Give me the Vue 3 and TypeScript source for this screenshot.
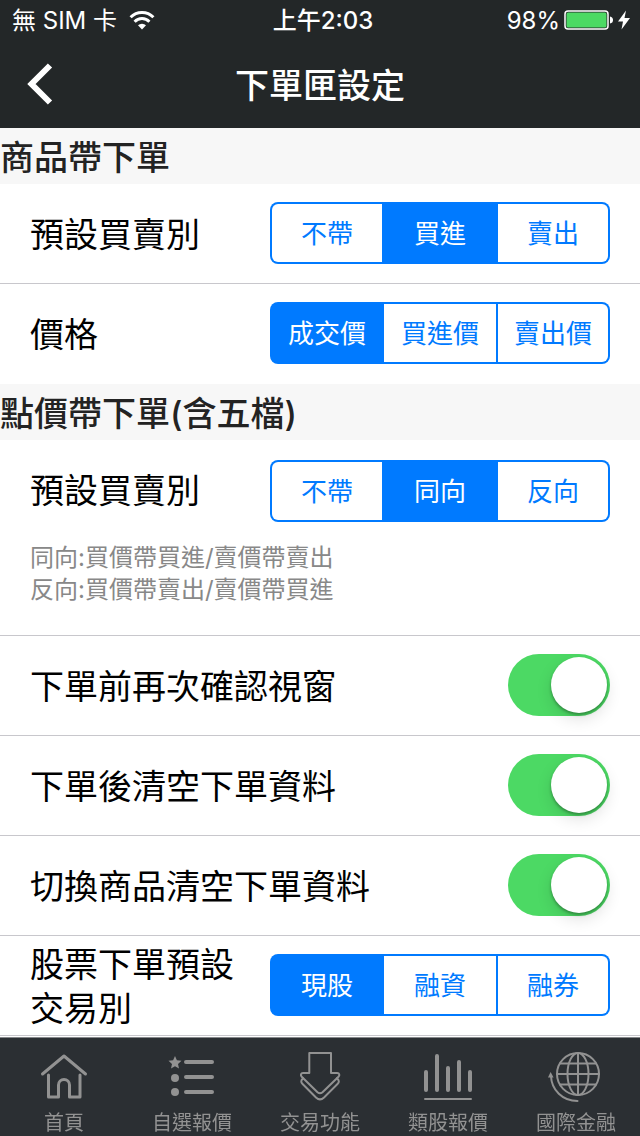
<script setup lang="ts">
import { reactive } from 'vue'

interface ChoiceRow {
  kind: 'choice'
  id: string
  label: string
  options: string[]
  notes?: string[]
}

interface SwitchRow {
  kind: 'switch'
  id: string
  label: string
}

interface Section {
  id: string
  title: string
  rows: (ChoiceRow | SwitchRow)[]
}

const sections: Section[] = [
  {
    id: 'quote',
    title: '商品帶下單',
    rows: [
      { kind: 'choice', id: 'quote-side', label: '預設買賣別', options: ['不帶', '買進', '賣出'] },
      { kind: 'choice', id: 'quote-price', label: '價格', options: ['成交價', '買進價', '賣出價'] },
    ],
  },
  {
    id: 'tick',
    title: '點價帶下單(含五檔)',
    rows: [
      {
        kind: 'choice',
        id: 'tick-side',
        label: '預設買賣別',
        options: ['不帶', '同向', '反向'],
        notes: ['同向:買價帶買進/賣價帶賣出', '反向:買價帶賣出/賣價帶買進'],
      },
      { kind: 'switch', id: 'confirm', label: '下單前再次確認視窗' },
      { kind: 'switch', id: 'clear-after', label: '下單後清空下單資料' },
      { kind: 'switch', id: 'clear-change', label: '切換商品清空下單資料' },
      { kind: 'choice', id: 'stock-type', label: '股票下單預設交易別', options: ['現股', '融資', '融券'] },
    ],
  },
]

const choices = reactive<Record<string, string>>({
  'quote-side': '買進',
  'quote-price': '成交價',
  'tick-side': '同向',
  'stock-type': '現股',
})

const switches = reactive<Record<string, boolean>>({
  confirm: true,
  'clear-after': true,
  'clear-change': true,
})

const tabs = [
  { id: 'home', label: '首頁' },
  { id: 'watch', label: '自選報價' },
  { id: 'trade', label: '交易功能' },
  { id: 'sector', label: '類股報價' },
  { id: 'global', label: '國際金融' },
]
</script>

<template>
  <div class="screen">
    <header class="top">
      <div class="status">
        <div class="carrier">
          <span>無 SIM 卡</span>
          <svg class="wifi" viewBox="0 0 26 20" aria-hidden="true">
            <path d="M1.600 7.200a16 16 0 0 1 22.800 0" fill="none" stroke="#fff" stroke-width="3" />
            <path d="M5.600 11.700a10.400 10.400 0 0 1 14.800 0" fill="none" stroke="#fff" stroke-width="3" />
            <path d="M13 19.500l-4-4.200a5.800 5.800 0 0 1 8 0z" fill="#fff" />
          </svg>
        </div>
        <span class="clock">上午2:03</span>
        <div class="power">
          <span>98%</span>
          <svg class="battery" viewBox="0 0 50 20" aria-hidden="true">
            <rect x="1" y="1" width="43" height="18" rx="3" fill="none" stroke="#fff" stroke-width="1.500" />
            <rect x="2.500" y="2.500" width="40" height="15" rx="1.500" fill="#4cd964" />
            <path d="M46 6.500q3 .5 3 3.500t-3 3.500z" fill="#fff" />
          </svg>
          <svg class="bolt" viewBox="0 0 12 20" aria-hidden="true">
            <path d="M8 .5L0 11.500h5L3.500 19.500L12 8H6.500z" fill="#fff" />
          </svg>
        </div>
      </div>
      <div class="bar">
        <button class="back" type="button" aria-label="返回">
          <svg viewBox="0 0 26 42" aria-hidden="true">
            <path d="M23 2.500L4.500 21L23 39.500" fill="none" stroke="#fff" stroke-width="6" />
          </svg>
        </button>
        <h1>下單匣設定</h1>
      </div>
    </header>

    <main>
      <section v-for="section in sections" :key="section.id">
        <h2>{{ section.title }}</h2>
        <template v-for="row in section.rows" :key="row.id">
          <div v-if="row.kind === 'choice'" class="row" :class="{ noted: row.notes }">
            <div class="line">
              <span :id="row.id" class="label">{{ row.label }}</span>
              <div class="segments" role="radiogroup" :aria-labelledby="row.id">
                <label v-for="option in row.options" :key="option" class="segment">
                  <input v-model="choices[row.id]" type="radio" :name="row.id" :value="option" />
                  <span>{{ option }}</span>
                </label>
              </div>
            </div>
            <p v-if="row.notes" class="notes">
              <span v-for="note in row.notes" :key="note">{{ note }}</span>
            </p>
          </div>
          <div v-else class="row">
            <div class="line">
              <label class="label" :for="row.id">{{ row.label }}</label>
              <input :id="row.id" v-model="switches[row.id]" class="switch" type="checkbox" role="switch" />
            </div>
          </div>
        </template>
      </section>
    </main>

    <nav class="tabs">
      <a v-for="tab in tabs" :key="tab.id" :href="'#' + tab.id">
        <svg viewBox="0 0 56 56" aria-hidden="true">
          <g v-if="tab.id === 'home'" class="stroke">
            <path d="M6.500 26L28 8l21.500 18" />
            <path d="M12.500 27v22h10V37a5.500 5.500 0 0 1 11 0v12h10.500V27" />
          </g>
          <g v-else-if="tab.id === 'watch'">
            <path
              class="fill"
              d="M11 8l1.900 4.300 4.600.5-3.500 3.200 1 4.600-4-2.300-4 2.300 1-4.600-3.500-3.200 4.600-.5z"
            />
            <circle class="fill" cx="11" cy="30" r="4" />
            <circle class="fill" cx="11" cy="44" r="4" />
            <path class="thick" d="M22 14h26M22 29h26M22 44h26" />
          </g>
          <g v-else-if="tab.id === 'trade'" class="thin">
            <path
              d="M17.300 25V5h21.700v20h6.200c2.200 0 2.800 2.200 1.300 3.700L30.500 44.200q-2.500 2.200-5 0L9.700 28.700c-1.500-1.500-.9-3.700 1.300-3.700z"
            />
            <path d="M11.200 30.200c-2.500 2.200-2.500 4-.6 5.800L24 49.500q4 3.800 8 0L45.500 36c1.900-1.800 1.900-3.600-.6-5.800" />
          </g>
          <g v-else-if="tab.id === 'sector'">
            <path class="thick" d="M6 24v18M17 8v34M28 20v22M39 14v28M50 24v18" />
            <path class="thin" d="M5 51h46" />
          </g>
          <g v-else class="thin">
            <circle cx="30" cy="26" r="21" />
            <ellipse cx="30" cy="26" rx="10.500" ry="21" />
            <path d="M30 5v42M9 26h42M12 15.500h36M12 36.500h36" />
            <path d="M29.500 53C14.500 53 3.500 42 3 28" />
            <path class="fill" stroke="none" d="M2.600 24L0 29.500h5.600z" />
          </g>
        </svg>
        <span>{{ tab.label }}</span>
      </a>
    </nav>
  </div>
</template>

<style>
body {
  margin: 0;
  background: #fff;
}
</style>

<style scoped>
.screen {
  display: flex;
  flex-direction: column;
  min-height: 100vh;
  color: #000;
  font-family: Inter, 'Noto Sans CJK TC', sans-serif;
  font-size: 34px;
}

.top {
  background: #232728;
  color: #fff;
}

.status {
  display: grid;
  grid-template-columns: 1fr auto 1fr;
  align-items: center;
  height: 40px;
  padding: 0 10px 0 12px;
  font-size: 24px;
  line-height: 38px;
}

.status span {
  padding-top: 2px;
}

.carrier,
.power {
  display: flex;
  align-items: center;
}

.carrier {
  gap: 12px;
}

.power {
  justify-content: flex-end;
  gap: 4px;
}

.clock {
  padding-left: 4px;
  font-weight: 500;
}

.wifi {
  width: 26px;
  height: 20px;
}

.battery {
  width: 50px;
  height: 20px;
}

.bolt {
  width: 12px;
  height: 20px;
}

.bar {
  display: grid;
  grid-template-columns: 80px 1fr 80px;
  align-items: center;
  height: 88px;
}

.back {
  display: flex;
  align-items: center;
  justify-content: center;
  height: 88px;
  padding: 0;
  border: 0;
  background: none;
}

.back svg {
  width: 26px;
  height: 42px;
}

h1 {
  margin: 0;
  padding-top: 4px;
  font-size: 34px;
  font-weight: 500;
  line-height: 84px;
  text-align: center;
}

main {
  flex: 1;
}

h2 {
  margin: 0;
  padding-top: 4px;
  background: #f7f7f7;
  color: #232323;
  font-size: 34px;
  font-weight: 500;
  line-height: 52px;
}

.row {
  box-sizing: border-box;
  min-height: 100px;
  padding: 0 30px;
  border-bottom: 1px solid #c8c7cc;
}

section:first-child .row:last-child {
  border-bottom-color: transparent;
}

.line {
  display: flex;
  align-items: center;
  gap: 20px;
  min-height: 98px;
}

.noted {
  padding-top: 20px;
  padding-bottom: 29px;
}

.noted .line {
  min-height: 62px;
}

.label {
  flex: 1;
  padding-top: 4px;
  line-height: 44px;
}

.noted .label {
  padding-top: 0;
}

.segments {
  box-sizing: border-box;
  display: grid;
  grid-template-columns: repeat(3, 1fr);
  width: 340px;
  height: 62px;
  padding: 2px;
  border-radius: 8px;
  background: #007aff;
  font-size: 26px;
}

.segment {
  position: relative;
  box-sizing: border-box;
  display: flex;
  align-items: center;
  justify-content: center;
  background: #fff;
  background-clip: padding-box;
  color: #007aff;
  line-height: 56px;
}

.segment span {
  padding-top: 2px;
}

.segment:first-child {
  border-right: 2px solid #007aff;
  border-radius: 6px 0 0 6px;
}

.segment:last-child {
  border-left: 2px solid #007aff;
  border-radius: 0 6px 6px 0;
}

.segment:has(input:checked) {
  background: #007aff;
  color: #fff;
}

.segment input {
  position: absolute;
  inset: 0;
  margin: 0;
  opacity: 0;
}

.notes {
  display: flex;
  flex-direction: column;
  margin: 20px 0 0;
  color: #888;
  font-size: 24px;
  line-height: 32px;
}

.switch {
  box-sizing: border-box;
  display: flex;
  width: 102px;
  height: 62px;
  margin: 0;
  padding: 3px;
  appearance: none;
  border-radius: 31px;
  background: #e5e5ea;
}

.switch::before {
  content: '';
  width: 56px;
  height: 56px;
  border-radius: 50%;
  background: #fff;
  box-shadow:
    0 6px 16px rgba(0, 0, 0, 0.12),
    0 2px 3px rgba(0, 0, 0, 0.3);
}

.switch:checked {
  justify-content: flex-end;
  background: #4cd964;
}

.tabs {
  position: sticky;
  bottom: 0;
  box-sizing: border-box;
  display: grid;
  grid-template-columns: repeat(5, 1fr);
  height: 99px;
  padding-top: 10px;
  border-top: 1px solid #85878a;
  background: #2b2f33;
}

.tabs a {
  display: flex;
  flex-direction: column;
  align-items: center;
  color: #929292;
  font-size: 20px;
  line-height: 28px;
  text-decoration: none;
}

.tabs svg {
  width: 56px;
  height: 56px;
  margin-bottom: 5px;
}

.stroke,
.thick,
.thin {
  fill: none;
  stroke: #929292;
  stroke-linecap: round;
  stroke-linejoin: round;
}

.stroke {
  stroke-width: 3;
}

.thick {
  stroke-width: 4;
}

.thin {
  stroke-width: 2;
}

.fill {
  fill: #929292;
}
</style>
